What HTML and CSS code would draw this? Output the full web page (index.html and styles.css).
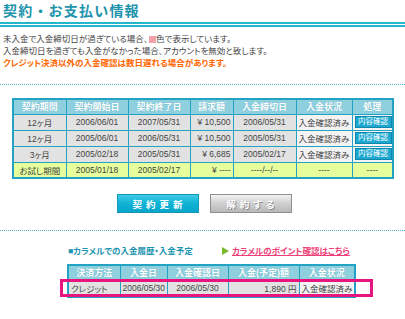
FILE: index.html
```html
<!DOCTYPE html>
<html lang="ja">
<head>
<meta charset="utf-8">
<link rel="stylesheet" href="styles.css">
</head>
<body>
<div class="page">
  <h1 class="title">契約・お支払い情報</h1>
  <div class="notes">
    <p>未入金で入金締切日が過ぎている場合、<span class="pinkbox"></span>色で表示しています。</p>
    <p>入金締切日を過ぎても入金がなかった場合、アカウントを無効と致します。</p>
    <p class="warn">クレジット決済以外の入金確認は数日遅れる場合があります。</p>
  </div>
  <div class="dots dots-top"></div>

  <table class="grid contracts">
    <colgroup>
      <col style="width:53px"><col style="width:62px"><col style="width:62px"><col style="width:43px"><col style="width:63px"><col style="width:56px"><col style="width:41px">
    </colgroup>
    <thead>
      <tr><th>契約期間</th><th>契約開始日</th><th>契約終了日</th><th>請求額</th><th>入金締切日</th><th>入金状況</th><th>処理</th></tr>
    </thead>
    <tbody>
      <tr><td>12ヶ月</td><td>2006/06/01</td><td>2007/05/31</td><td class="num">¥ 10,500</td><td>2006/05/31</td><td class="light">入金確認済み</td><td class="light"><span class="mini-btn">内容確認</span></td></tr>
      <tr><td>12ヶ月</td><td>2005/06/01</td><td>2006/05/31</td><td class="num">¥ 10,500</td><td>2005/05/31</td><td class="light">入金確認済み</td><td class="light"><span class="mini-btn">内容確認</span></td></tr>
      <tr><td>3ヶ月</td><td>2005/02/18</td><td>2005/05/31</td><td class="num">¥ 6,685</td><td>2005/02/17</td><td class="light">入金確認済み</td><td class="light"><span class="mini-btn">内容確認</span></td></tr>
      <tr class="trial"><td>お試し期間</td><td>2005/01/18</td><td>2005/02/17</td><td class="num">¥ ----</td><td>----/--/--</td><td>----</td><td>----</td></tr>
    </tbody>
  </table>

  <div class="buttons">
    <span class="btn btn-renew">契約更新</span>
    <span class="btn btn-cancel">解約する</span>
  </div>
  <div class="dots dots-bottom"></div>

  <div class="links">
    <span class="link-history">■カラメルでの入金履歴・入金予定</span>
    <span class="link-points"><span class="tri"></span><span class="link-text">カラメルのポイント確認はこちら</span></span>
  </div>

  <div class="history-wrap">
    <table class="grid history">
      <colgroup>
        <col style="width:52px"><col style="width:47px"><col style="width:61px"><col style="width:71px"><col style="width:56px">
      </colgroup>
      <thead>
        <tr><th>決済方法</th><th>入金日</th><th>入金確認日</th><th>入金(予定)額</th><th>入金状況</th></tr>
      </thead>
      <tbody>
        <tr><td class="left">クレジット</td><td>2006/05/30</td><td>2006/05/30</td><td class="num">1,890 円</td><td class="light">入金確認済み</td></tr>
      </tbody>
    </table>
    <div class="highlight"></div>
  </div>
</div>
</body>
</html>
```

FILE: styles.css
```css
* { box-sizing: border-box; }
html, body { margin: 0; padding: 0; background: #ffffff; }
body {
  font-family: "Liberation Sans", "Noto Sans CJK JP", sans-serif;
  font-feature-settings: "palt";
  color: #333333;
  font-size: 8.5px;
}
.page { width: 405px; }

.title {
  margin: 0;
  padding: 2px 0 1px 3px;
  font-size: 14px;
  line-height: 19px;
  letter-spacing: 1.2px;
  font-weight: bold;
  font-feature-settings: normal;
  color: #1d93ad;
  border-bottom: 5px double #25b5cd;
}

.notes { margin-top: 6px; padding-left: 3px; }
.notes p { margin: 0; line-height: 12px; font-size: 8.5px; color: #444; }
.notes p.warn { color: #ff6600; font-weight: bold; }
.pinkbox {
  display: inline-block;
  width: 7px; height: 7px;
  background: #f4a0a8;
  vertical-align: -0.5px;
  margin: 0 0.5px;
}

.dots { border-top: 1px dotted #55b5c9; height: 0; }
.dots-top { margin-top: 15px; }
.dots-bottom { margin-top: 17px; }

.grid {
  border-collapse: collapse;
  table-layout: fixed;
  border: 2px solid #22a3c4;
}
.grid th, .grid td {
  border: 1px solid #22a3c4;
  padding: 0 2px;
  text-align: center;
  white-space: nowrap;
  overflow: hidden;
  font-weight: normal;
}
.grid th {
  background: #8fd0df;
  color: #ffffff;
  font-weight: bold;
  font-size: 9px;
  text-shadow: 0 0 1px #5aaabb;
}
.grid td { background: #e2e2e2; color: #444; font-size: 8.5px; }
.grid td.num { text-align: right; }
.grid td.left { text-align: left; }
.grid td.light { background: #f3f3f3; }

.contracts { margin: 13px 0 0 12px; width: 382px; }
.contracts thead tr { height: 15px; }
.contracts tbody tr { height: 16px; }
.contracts tr.trial td { background: #e6ff9c; }

.mini-btn {
  display: inline-block;
  width: 37px;
  height: 12px;
  line-height: 10px;
  background: #1aa8d0;
  border: 1px solid #0d87ab;
  color: #ffffff;
  font-size: 7.5px;
  vertical-align: middle;
}

.buttons {
  margin-top: 15px;
  display: flex;
  justify-content: center;
  gap: 11px;
  padding-left: 3px;
}
.btn {
  display: flex;
  align-items: center;
  justify-content: center;
  width: 82px;
  height: 19px;
  font-size: 9.5px;
  font-weight: bold;
  letter-spacing: 4px;
  padding-left: 4px;
  color: #ffffff;
}
.btn-renew {
  background: linear-gradient(#3fcbe6, #10b2d6 50%, #07a6ca);
  border: 1px solid #1496b6;
}
.btn-cancel {
  background: linear-gradient(#f2f2f2, #cfcfcf 50%, #b9b9b9);
  border: 1px solid #8f8f8f;
  text-shadow: 1px 1px 0 #8a8a8a;
}

.links {
  margin-top: 14px;
  display: flex;
  align-items: center;
  line-height: 12px;
  padding-left: 68px;
  font-weight: bold;
  font-size: 8.5px;
}
.link-history { color: #1d95b0; width: 154px; }
.link-points { display: flex; align-items: center; }
.tri {
  width: 0; height: 0;
  border-left: 7px solid #7ab82a;
  border-top: 4px solid transparent;
  border-bottom: 4px solid transparent;
  margin-right: 3px;
}
.link-text { color: #ee3f78; text-decoration: underline; }

.history-wrap { position: relative; margin-top: 7px; padding-left: 67px; }
.history { width: 289px; }
.history thead tr { height: 14px; }
.history tbody tr { height: 17px; }
.highlight {
  position: absolute;
  left: 60px;
  top: 15px;
  width: 313px;
  height: 18px;
  border: 3px solid #e8157f;
}
```
